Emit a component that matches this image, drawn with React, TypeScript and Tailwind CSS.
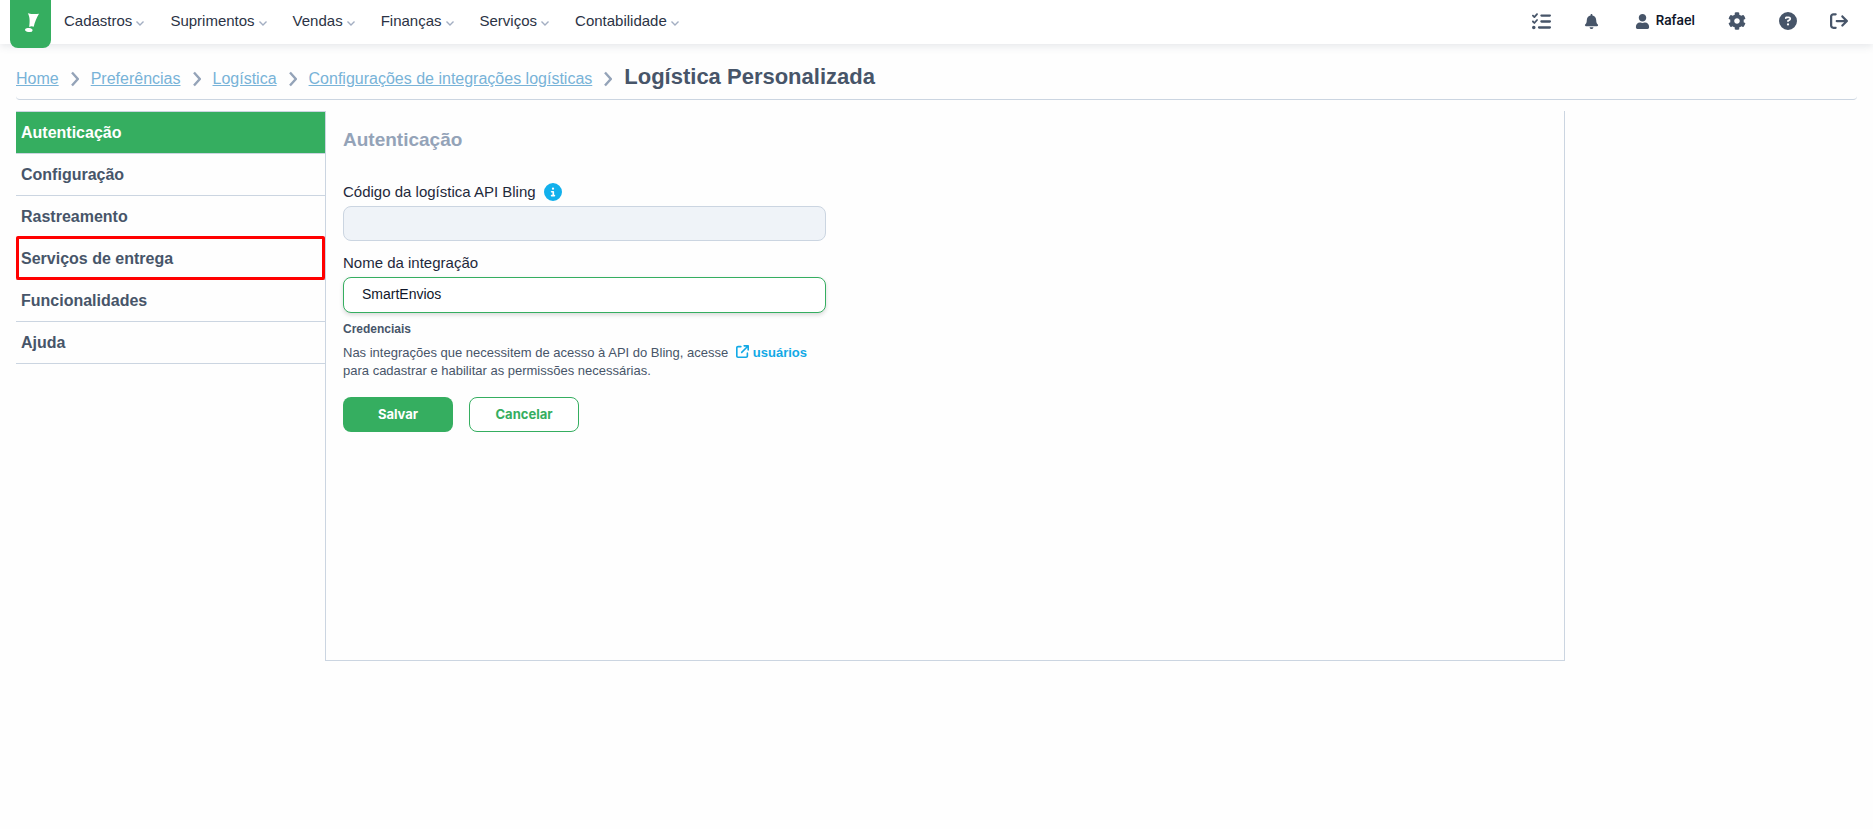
import { useState } from "react";
import { FaBell, FaCog, FaUser } from "react-icons/fa";
import {
  FaArrowRightFromBracket,
  FaArrowUpRightFromSquare,
  FaCircleInfo,
  FaCircleQuestion,
  FaListCheck,
} from "react-icons/fa6";

const menus = ["Cadastros", "Suprimentos", "Vendas", "Finanças", "Serviços", "Contabilidade"];
const crumbs = ["Home", "Preferências", "Logística", "Configurações de integrações logísticas"];
const sections = ["Autenticação", "Configuração", "Rastreamento", "Serviços de entrega", "Funcionalidades", "Ajuda"];
const activeSection = "Autenticação";
const highlightedSection = "Serviços de entrega";

function ChevronDown() {
  return (
    <svg className="mt-1 h-2 w-2" viewBox="0 0 8 8" fill="none" stroke="#a3aec2" strokeWidth="1.4" aria-hidden="true">
      <path d="M0.500 2.500L4 6l3.500-3.500" />
    </svg>
  );
}

function ChevronRight() {
  return (
    <svg className="mx-3 h-4 w-2" viewBox="0 0 8 16" fill="none" stroke="#94a3b8" strokeWidth="2.4" aria-hidden="true">
      <path d="M1 1.500L6.800 8L1 14.500" />
    </svg>
  );
}

function Logo() {
  return (
    <svg className="h-6 w-4" viewBox="0 0 16 24" fill="#fff" aria-hidden="true">
      <path d="M4.800 1.200C8.500 2.300 12.500 2.300 16 1.800C13.600 5.800 11.800 10 10.700 14.800C9.200 14 7.800 14.100 6.200 15C6.700 10.500 7.200 5 4.800 1.200Z" />
      <ellipse cx="5.800" cy="18" rx="3.800" ry="2" transform="rotate(8 5.800 18)" />
    </svg>
  );
}

function Header() {
  return (
    <header className="flex h-11 items-start justify-between bg-white pr-[25px] pl-2.5 shadow-[0_2px_8px_rgba(71,85,105,0.14)]">
      <div className="flex items-start">
        <a href="#" aria-label="Bling" className="flex h-12 w-[41px] items-center justify-center rounded-b-lg bg-[#35ae60]">
          <Logo />
        </a>
        <nav className="ml-[13px] flex h-[42px] items-center gap-[26px]">
          {menus.map((m) => (
            <button key={m} type="button" className="flex items-center gap-1 text-[15px] text-[#2b3345]">
              {m}
              <ChevronDown />
            </button>
          ))}
        </nav>
      </div>
      <div className="flex h-[42px] items-center gap-[33px] text-[#475569]">
        <button type="button" aria-label="Tarefas"><FaListCheck size={19} /></button>
        <button type="button" aria-label="Notificações" className="mr-[3px]"><FaBell size={15} /></button>
        <button type="button" className="flex items-center gap-1.5 font-['Inter',sans-serif] text-[13px] font-semibold text-[#0f172a]">
          <FaUser size={15} className="text-[#475569]" />
          Rafael
        </button>
        <button type="button" aria-label="Configurações"><FaCog size={18} /></button>
        <button type="button" aria-label="Ajuda"><FaCircleQuestion size={18} /></button>
        <button type="button" aria-label="Sair"><FaArrowRightFromBracket size={18} /></button>
      </div>
    </header>
  );
}

function Breadcrumbs() {
  return (
    <div className="mx-4 flex h-14 items-center rounded-b border-b border-[#cbd5e1] pt-2.5">
      {crumbs.map((c) => (
        <span key={c} className="mt-1 flex items-center">
          <a href="#" className="text-base text-[#78b3d8] underline">{c}</a>
          <ChevronRight />
        </span>
      ))}
      <h1 className="text-[22px] font-bold text-[#475569]">Logística Personalizada</h1>
    </div>
  );
}

function SectionLink({ label }: { label: string }) {
  const tone = label === activeSection ? "bg-[#35ae60] text-white" : "text-[#475569]";
  return (
    <a
      href="#"
      className={`relative flex h-[42px] items-center border-b border-[#cbd5e1] px-[5px] text-base font-bold ${tone}`}
    >
      {label}
      {label === highlightedSection && (
        <span className="absolute inset-x-0 -top-0.5 -bottom-px rounded-xs border-3 border-[#ff0000]" />
      )}
    </a>
  );
}

export default function App() {
  const [name, setName] = useState("SmartEnvios");
  return (
    <div className="min-h-screen bg-[#fefefe] font-['Liberation_Sans',Arial,sans-serif]">
      <Header />
      <Breadcrumbs />
      <main className="mx-4 mt-[11px] grid max-w-[1549px] grid-cols-[309px_1fr]">
        <nav className="border-t border-[#cbd5e1]">
          {sections.map((s) => (
            <SectionLink key={s} label={s} />
          ))}
        </nav>
        <section className="min-h-[550px] border-x border-b border-[#cbd5e1] px-[17px] pt-[17px]">
          <h2 className="text-[19px] leading-6 font-bold text-[#94a3b8]">Autenticação</h2>
          <form className="mt-[30px] flex max-w-[483px] flex-col" onSubmit={(e) => e.preventDefault()}>
            <div className="flex h-5 items-center gap-2">
              <label htmlFor="codigo" className="text-[15px] text-[#1e293b]">Código da logística API Bling</label>
              <FaCircleInfo size={18} color="#12b0ec" />
            </div>
            <input id="codigo" disabled className="mt-1 h-[35px] rounded-lg border border-[#cbd5e1] bg-[#eff3f8] px-[18px]" />
            <label htmlFor="nome" className="mt-3 text-[15px] leading-5 text-[#1e293b]">Nome da integração</label>
            <input
              id="nome"
              value={name}
              onChange={(e) => setName(e.target.value)}
              className="mt-1 h-9 rounded-lg border border-[#35ae60] bg-white px-[18px] pb-0.5 text-sm text-[#0f172a] shadow-[0_2px_4px_rgba(0,0,0,0.15)] outline-none"
            />
            <h3 className="mt-2 text-xs leading-4 font-bold text-[#475569]">Credenciais</h3>
            <p className="mt-[7px] text-[13px] leading-[18px] text-[#475569]">
              Nas integrações que necessitem de acesso à API do Bling, acesse{" "}
              <a href="#" className="font-bold text-[#12a9e6]">
                <FaArrowUpRightFromSquare size={13} className="mr-1 ml-1 inline align-[-1px]" />
                usuários
              </a>{" "}
              para cadastrar e habilitar as permissões necessárias.
            </p>
            <div className="mt-[17px] flex gap-4 font-['Inter',sans-serif] text-[13px] font-bold">
              <button type="submit" className="h-[35px] w-[110px] rounded-lg bg-[#35ae60] text-white">Salvar</button>
              <button type="button" className="h-[35px] w-[110px] rounded-lg border border-[#35ae60] bg-white text-[#35ae60]">Cancelar</button>
            </div>
          </form>
        </section>
      </main>
    </div>
  );
}
